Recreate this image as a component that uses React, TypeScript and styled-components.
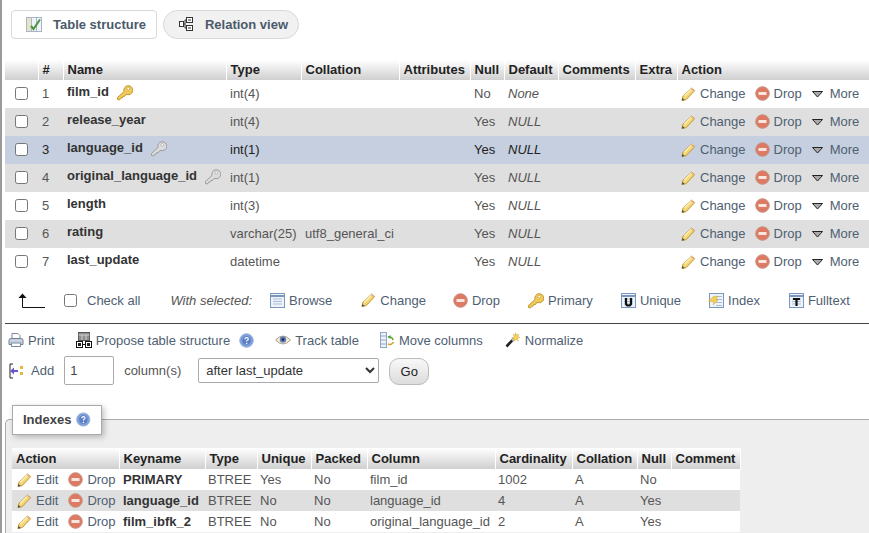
import React from 'react';
import styled, {createGlobalStyle} from "styled-components";

const GlobalStyle = createGlobalStyle`
  html, body {
    margin: 0;
    padding: 0;
    background: #fff;
    overflow: hidden;
  }
  body {
    font-family: "Liberation Sans", Arial, sans-serif;
    font-size: 13px;
    color: #444;
  }
`
const Page = styled.div`
  width: 869px;
  height: 533px;
  box-sizing: border-box;
  border-left: 2px solid #9a9a9a;
  padding-top: 10px;
  overflow: hidden;
`
const Tabs = styled.div`
  display: flex;
  gap: 6px;
  padding-left: 9px;
  height: 29px;
  margin-bottom: 21px;
`
const Tab = styled.div<{$active?: boolean}>`
  display: flex;
  align-items: center;
  gap: ${p => p.$active ? '10px' : '12px'};
  box-sizing: border-box;
  height: 29px;
  padding-bottom: 1px;
  font-weight: bold;
  color: #4b5a6b;
  border: 1px solid #d8d8d8;
  border-radius: ${p => p.$active ? '4px' : '15px'};
  background: ${p => p.$active ? '#fff' : '#f1f1f1'};
  padding-left: ${p => p.$active ? '14px' : '15px'};
  padding-right: 10px;
`
const Table = styled.table<{$w: number}>`
  table-layout: fixed;
  border-collapse: collapse;
  width: ${p => p.$w}px;
`
const StructureTable = styled(Table)`
  margin-left: 3px;
`
const Th = styled.th`
  box-sizing: border-box;
  height: 20px;
  padding: 0 0 2px 4px;
  text-align: left;
  font-size: 13px;
  font-weight: bold;
  color: #222;
  background: linear-gradient(#fff, #cfcfcf);
  border-right: 1px solid #fff;
  white-space: nowrap;
  overflow: hidden;
`
const Tr = styled.tr<{$bg: string}>`
  background: ${p => p.$bg};
  color: ${p => p.$bg === '#c5cfdf' ? '#222' : '#555'};
`
const Td = styled.td`
  box-sizing: border-box;
  height: 28px;
  padding: 0 0 1px 4px;
  white-space: nowrap;
  overflow: hidden;
`
const CheckCell = styled(Td)`
  padding: 0 0 2px 10px;
`
const NameCell = styled(Td)`
  padding: 0 0 6px 4px;
  font-weight: bold;
  color: #333;
`
const NameInner = styled.div`
  display: flex;
  align-items: flex-start;
  gap: 7px;
  height: 15px;
`
const Empty = styled.i`
  font-style: italic;
`
const Box = styled.span`
  display: block;
  box-sizing: border-box;
  width: 13px;
  height: 13px;
  background: #fff;
  border: 1px solid #767676;
  border-radius: 2.5px;
`
const Actions = styled.div<{$gap: number}>`
  display: flex;
  align-items: center;
  gap: ${p => p.$gap}px;
`
const Link = styled.span<{$gap?: number}>`
  display: inline-flex;
  align-items: center;
  gap: ${p => p.$gap ?? 4}px;
  color: #4f6072;
  white-space: nowrap;
`
const BulkBar = styled.div`
  display: flex;
  align-items: center;
  height: 24px;
  margin-top: 12px;
  padding-left: 16px;
`
const BulkCheck = styled.div`
  display: flex;
  align-items: center;
  gap: 10px;
  margin: 0 30px 0 19px;
  color: #4f6072;
`
const WithSelected = styled.i`
  color: #555;
  margin-right: 18px;
`
const BulkItems = styled.div`
  display: flex;
`
const BulkLink = styled(Link)<{$after: number}>`
  margin-right: ${p => p.$after}px;
`
const Rule = styled.div`
  height: 1px;
  background: #444;
  margin: 11px 0 0 3px;
`
const ToolRow = styled.div`
  display: flex;
  align-items: center;
  gap: 21px;
  height: 20px;
  margin-top: 6px;
  padding-left: 6px;
`
const NormalizeLink = styled(Link)`
  gap: 5px;
  margin-left: 1px;
`
const AddRow = styled.form`
  display: flex;
  align-items: flex-start;
  height: 29px;
  margin-top: 6px;
  padding-left: 7px;
`
const AddLabel = styled(Link)`
  align-self: center;
  gap: 7px;
  margin-right: 10px;
`
const NumberInput = styled.input`
  box-sizing: border-box;
  width: 50px;
  height: 29px;
  padding: 0 0 0 5px;
  border: 1px solid #aaa;
  border-radius: 2px;
  font: 13px "Liberation Sans", Arial, sans-serif;
  color: #444;
  margin-right: 10px;
`
const AddText = styled.span`
  align-self: center;
  color: #555;
  margin-right: 17px;
`
const Select = styled.select`
  box-sizing: border-box;
  width: 181px;
  height: 25px;
  margin: 2px 10px 0 0;
  padding-left: 3px;
  background: #fff;
  border: 1px solid #aaa;
  border-radius: 2px;
  font: 13px "Liberation Sans", Arial, sans-serif;
  color: #333;
`
const GoButton = styled.button`
  box-sizing: border-box;
  width: 40px;
  height: 27px;
  margin-top: 2px;
  padding: 0;
  border: 1px solid #bbb;
  border-radius: 10px;
  background: linear-gradient(#f8f8f8, #dcdcdc);
  font: 13px "Liberation Sans", Arial, sans-serif;
  color: #222;
`
const Fieldset = styled.section`
  box-sizing: border-box;
  height: 140px;
  margin: 34px 0 0 3px;
  padding: 0 0 0 6px;
  background: #eee;
  border-top: 1px solid #aaa;
  border-left: 1px solid #aaa;
  border-top-left-radius: 5px;
`
const Legend = styled.div`
  display: flex;
  align-items: center;
  gap: 5px;
  box-sizing: border-box;
  width: 90px;
  height: 30px;
  margin: -15px 0 13px 0;
  padding: 0 10px 2px;
  background: #fff;
  border: 1px solid #aaa;
  box-shadow: 2px 2px 6px rgba(0, 0, 0, 0.25);
  font-weight: bold;
  color: #444;
`
const IndexTh = styled(Th)`
  height: 21px;
  padding-bottom: 0;
`
const IndexTd = styled.td<{$bold?: boolean}>`
  box-sizing: border-box;
  height: 21px;
  padding: 0 0 0 ${p => p.$bold ? 4 : 3}px;
  white-space: nowrap;
  overflow: hidden;
  font-weight: ${p => p.$bold ? 'bold' : 'normal'};
  color: ${p => p.$bold ? '#333' : 'inherit'};
`
const IndexActionTd = styled(IndexTd)`
  padding-left: 5px;
`

const Pencil = () => (
  <svg width="15" height="16" viewBox="0 0 16 16">
    <path d="M1 15l1-4.5L11.500 1.500l3 3L5.500 14z" fill="#f3d774" stroke="#b8903a" strokeWidth="1"/>
    <path d="M3.500 10.500l8.500-8.500" stroke="#fff3b8" strokeWidth="1.500"/>
    <path d="M1 15l.6-2.800 2.200 2.200z" fill="#444"/>
    <path d="M11.500 1.500l3 3-1.200 1.200-3-3z" fill="#e8b28a"/>
  </svg>
)
const DropIcon = () => (
  <svg width="15" height="15" viewBox="0 0 15 15">
    <circle cx="7.500" cy="7.500" r="6.800" fill="#dc7a64" stroke="#c99080"/>
    <rect x="3.500" y="6" width="8" height="3" fill="#f8e6e0"/>
  </svg>
)
const MoreIcon = () => (
  <svg width="13" height="8" viewBox="0 0 13 8">
    <path d="M1.500 1.500h10L6.500 7z" fill="#aaa" stroke="#222" strokeWidth="1"/>
  </svg>
)
const Key = ({fill = '#f0c95a', line = '#c09a30'}: {fill?: string, line?: string}) => (
  <svg width="17" height="17" viewBox="0 0 17 17">
    <path d="M1.500 13.500L8 7.500a4.500 4.500 0 1 1 3 3l-1.500.4-1 1.600-1.500-.2-.8 1.700-1.600.2L3.500 16 1.500 15.500z" fill={fill} stroke={line}/>
    <circle cx="12.300" cy="4.800" r="1.300" fill="#fff" stroke={line} strokeWidth="0.600"/>
  </svg>
)
const GrayKey = () => <Key fill="#dcdcdc" line="#9c9c9c"/>

const TableIcon = ({children}: {children?: React.ReactNode}) => (
  <svg width="15" height="15" viewBox="0 0 15 15">
    <rect x="0.500" y="0.500" width="14" height="14" fill="#eef3fa" stroke="#7c97bd"/>
    <path d="M0.500 3h14" stroke="#7c97bd" strokeWidth="2"/>
    <path d="M3 6h9M3 8.500h9M3 11h9" stroke="#a9bdd9"/>
    {children}
  </svg>
)
const LetterIcon = ({d}: {d: string}) => (
  <TableIcon>
    <path d={d} stroke="#111" strokeWidth="2.200" fill="none"/>
  </TableIcon>
)
const UniqueIcon = () => <LetterIcon d="M5 5v5.500a2.500 2 0 0 0 5 0V5"/>
const FulltextIcon = () => <LetterIcon d="M4 6h7M7.500 6v7"/>
const IndexIcon = () => (
  <svg width="16" height="15" viewBox="0 0 16 15">
    <rect x="1.500" y="0.500" width="14" height="14" fill="#eef3fa" stroke="#7c97bd"/>
    <path d="M8 3.500h6M8 6.500h6M8 9.500h6M8 12.500h6" stroke="#a9bdd9"/>
    <path d="M0.500 8L6 3l4 .5L8 7l2 .5-5 4.500 1-3z" fill="#f1cf5a" stroke="#d4a93a" strokeWidth="0.500"/>
  </svg>
)
const StructureIcon = () => (
  <svg width="17" height="15" viewBox="0 0 17 15">
    <rect x="0.500" y="0.500" width="5" height="14" fill="#e6e4c4" stroke="#a7b6c9"/>
    <rect x="5.500" y="0.500" width="5" height="14" fill="#eef3fa" stroke="#a7b6c9"/>
    <rect x="10.500" y="0.500" width="5" height="14" fill="#eef3fa" stroke="#a7b6c9"/>
    <path d="M5 9l2.500 3L14 2.500" stroke="#4c9440" strokeWidth="2" fill="none"/>
  </svg>
)
const RelationIcon = () => (
  <svg width="14" height="14" viewBox="0 0 14 14">
    <rect x="7.500" y="0.500" width="6" height="5" fill="#fff" stroke="#333"/>
    <rect x="7.500" y="8.500" width="6" height="5" fill="#fff" stroke="#333"/>
    <rect x="0.500" y="4.500" width="4" height="5" fill="#fff" stroke="#333"/>
    <path d="M4.500 7h1.500M6 3v8M6 3h1.500M6 11h1.500M9 3h3M9 11h3" stroke="#333"/>
  </svg>
)
const ArrowIcon = () => (
  <svg width="27" height="15" viewBox="0 0 27 15">
    <path d="M4.500 3v11.500h22.500" stroke="#111" strokeWidth="1" fill="none"/>
    <path d="M0.500 5L4.500 0.500 8.500 5z" fill="#111"/>
  </svg>
)
const PrintIcon = () => (
  <svg width="16" height="16" viewBox="0 0 16 16">
    <path d="M4 1.500h6l2 2v4H4z" fill="#fff" stroke="#7d8ba0"/>
    <path d="M1 8.500q0-2 2-2h10q2 0 2 2v4H1z" fill="#c8d2df" stroke="#6f7f96"/>
    <rect x="3.500" y="11" width="9" height="3.500" fill="#fff" stroke="#7d8ba0"/>
  </svg>
)
const ProposeIcon = () => (
  <svg width="16" height="16" viewBox="0 0 16 16">
    <rect x="2.500" y="0.500" width="11" height="8" fill="#8f8f8f" stroke="#555"/>
    <path d="M2.500 3h11M6 3v5M10 3v5" stroke="#ddd" strokeWidth="0.800"/>
    <rect x="0.500" y="9.500" width="6" height="6" fill="#fff" stroke="#111"/>
    <rect x="9.500" y="9.500" width="6" height="6" fill="#fff" stroke="#111"/>
    <path d="M6.500 12.500h3" stroke="#111"/>
    <rect x="2" y="11" width="3" height="3" fill="#222"/>
    <rect x="11" y="11" width="3" height="3" fill="#222"/>
  </svg>
)
const HelpIcon = () => (
  <svg width="15" height="15" viewBox="0 0 15 15">
    <circle cx="7.500" cy="7.500" r="6.800" fill="#7d9fd8" stroke="#9db5df"/>
    <circle cx="7.500" cy="7.500" r="4.300" fill="#5a7fc4"/>
    <path d="M5.800 6.200q.2-1.600 1.800-1.600 1.700 0 1.700 1.400 0 1-1 1.300-.7.300-.7 1.200" stroke="#fff" strokeWidth="1.200" fill="none"/>
    <rect x="7" y="9.800" width="1.300" height="1.300" fill="#fff"/>
  </svg>
)
const EyeIcon = () => (
  <svg width="16" height="12" viewBox="0 0 16 12">
    <path d="M0.500 6Q8-2 15.500 6 8 14 0.500 6z" fill="#f1e9dd" stroke="#b3a38b"/>
    <circle cx="8" cy="5.500" r="3.200" fill="#5f7fb8"/>
    <circle cx="8" cy="5.500" r="1.300" fill="#223"/>
  </svg>
)
const MoveIcon = () => (
  <svg width="15" height="16" viewBox="0 0 15 16">
    <rect x="0.500" y="0.500" width="6" height="15" fill="#eef3fa" stroke="#8fa6c6"/>
    <path d="M0.500 4h6M0.500 8h6M0.500 12h6" stroke="#8fa6c6"/>
    <path d="M8 5a4 4 0 0 1 5 3" stroke="#5aa63c" strokeWidth="1.600" fill="none"/>
    <path d="M13.500 10a4 4 0 0 1-5.500 2" stroke="#d1a32c" strokeWidth="1.600" fill="none"/>
    <path d="M10.500 3v4l-3-2z" fill="#5aa63c"/>
  </svg>
)
const WandIcon = () => (
  <svg width="15" height="16" viewBox="0 0 15 16">
    <path d="M1.500 14.500L8.500 7" stroke="#222" strokeWidth="2.600"/>
    <path d="M7 8.500l2-2" stroke="#bbb" strokeWidth="2.600"/>
    <path d="M10.500 0.500l.8 2.500 2.500-1-1 2.500 2.200 1-2.500.8.800 2.700-2.500-1.300-1.800 1.500-.2-2.500-2-.8 2.200-1.200-.5-2.400 2 1z" fill="#f2d25c" stroke="#c9a030" strokeWidth="0.400"/>
  </svg>
)
const AddColumnIcon = () => (
  <svg width="15" height="16" viewBox="0 0 15 16">
    <path d="M4 1H1v14h3" stroke="#222" fill="none"/>
    <path d="M1 8l4-3.500V7h4v2H5v2.500z" fill="#6a55c9"/>
    <rect x="11" y="3" width="3" height="3" fill="#e2b93b"/>
    <rect x="11" y="9" width="3" height="3" fill="#e2b93b"/>
  </svg>
)

interface column {
    name: string
    key?: React.ReactNode
    type: string
    collation?: string
    nullable: string
    def: string
}

const columns: column[] = [
    {name: 'film_id', key: <Key/>, type: 'int(4)', nullable: 'No', def: 'None'},
    {name: 'release_year', type: 'int(4)', nullable: 'Yes', def: 'NULL'},
    {name: 'language_id', key: <GrayKey/>, type: 'int(1)', nullable: 'Yes', def: 'NULL'},
    {name: 'original_language_id', key: <GrayKey/>, type: 'int(1)', nullable: 'Yes', def: 'NULL'},
    {name: 'length', type: 'int(3)', nullable: 'Yes', def: 'NULL'},
    {name: 'rating', type: 'varchar(25)', collation: 'utf8_general_ci', nullable: 'Yes', def: 'NULL'},
    {name: 'last_update', type: 'datetime', nullable: 'Yes', def: 'NULL'},
]
const structureHeads: [string, number][] = [
    ['', 33], ['#', 25], ['Name', 163], ['Type', 75], ['Collation', 98], ['Attributes', 71],
    ['Null', 34], ['Default', 54], ['Comments', 77], ['Extra', 42], ['Action', 192],
]
const indexHeads: [string, number][] = [
    ['Action', 107], ['Keyname', 86], ['Type', 52], ['Unique', 54], ['Packed', 56], ['Column', 128],
    ['Cardinality', 77], ['Collation', 65], ['Null', 34], ['Comment', 69],
]
const indexes = [
    {name: 'PRIMARY', unique: 'Yes', column: 'film_id', card: '1002', nullable: 'No'},
    {name: 'language_id', unique: 'No', column: 'language_id', card: '4', nullable: 'Yes'},
    {name: 'film_ibfk_2', unique: 'No', column: 'original_language_id', card: '2', nullable: 'Yes'},
]

const rowBg = (i: number) => i === 2 ? '#c5cfdf' : i % 2 ? '#dfdfdf' : '#fff'

const App = () => {
    return (
        <Page>
            <GlobalStyle/>
            <Tabs>
                <Tab $active><StructureIcon/>Table structure</Tab>
                <Tab><RelationIcon/>Relation view</Tab>
            </Tabs>
            <StructureTable $w={864}>
                <colgroup>
                    {structureHeads.map(([h, w], i) => <col key={i} width={w}/>)}
                </colgroup>
                <thead>
                    <tr>{structureHeads.map(([h], i) => <Th key={i}>{h}</Th>)}</tr>
                </thead>
                <tbody>
                    {columns.map((c, i) => (
                        <Tr key={c.name} $bg={rowBg(i)}>
                            <CheckCell><Box/></CheckCell>
                            <Td>{i + 1}</Td>
                            <NameCell><NameInner>{c.name}{c.key}</NameInner></NameCell>
                            <Td>{c.type}</Td>
                            <Td>{c.collation}</Td>
                            <Td/>
                            <Td>{c.nullable}</Td>
                            <Td><Empty>{c.def}</Empty></Td>
                            <Td/>
                            <Td/>
                            <Td>
                                <Actions $gap={9}>
                                    <Link><Pencil/>Change</Link>
                                    <Link><DropIcon/>Drop</Link>
                                    <Link $gap={6}><MoreIcon/>More</Link>
                                </Actions>
                            </Td>
                        </Tr>
                    ))}
                </tbody>
            </StructureTable>
            <BulkBar>
                <ArrowIcon/>
                <BulkCheck><Box/>Check all</BulkCheck>
                <WithSelected>With selected:</WithSelected>
                <BulkItems>
                    <BulkLink $after={29}><TableIcon/>Browse</BulkLink>
                    <BulkLink $after={27}><Pencil/>Change</BulkLink>
                    <BulkLink $after={27}><DropIcon/>Drop</BulkLink>
                    <BulkLink $after={28}><Key/>Primary</BulkLink>
                    <BulkLink $after={27}><UniqueIcon/>Unique</BulkLink>
                    <BulkLink $after={29}><IndexIcon/>Index</BulkLink>
                    <BulkLink $after={0}><FulltextIcon/>Fulltext</BulkLink>
                </BulkItems>
            </BulkBar>
            <Rule/>
            <ToolRow>
                <Link><PrintIcon/>Print</Link>
                <Link $gap={9}><Link><ProposeIcon/>Propose table structure</Link><HelpIcon/></Link>
                <Link><EyeIcon/>Track table</Link>
                <Link><MoveIcon/>Move columns</Link>
                <NormalizeLink><WandIcon/>Normalize</NormalizeLink>
            </ToolRow>
            <AddRow onSubmit={e => e.preventDefault()}>
                <AddLabel><AddColumnIcon/>Add</AddLabel>
                <NumberInput type="text" defaultValue="1"/>
                <AddText>column(s)</AddText>
                <Select defaultValue="after last_update">
                    <option>after last_update</option>
                </Select>
                <GoButton>Go</GoButton>
            </AddRow>
            <Fieldset>
                <Legend>Indexes <HelpIcon/></Legend>
                <Table $w={728}>
                    <colgroup>
                        {indexHeads.map(([h, w]) => <col key={h} width={w}/>)}
                    </colgroup>
                    <thead>
                        <tr>{indexHeads.map(([h]) => <IndexTh key={h}>{h}</IndexTh>)}</tr>
                    </thead>
                    <tbody>
                        {indexes.map((x, i) => (
                            <Tr key={x.name} $bg={i % 2 ? '#dfdfdf' : '#fff'}>
                                <IndexActionTd>
                                    <Actions $gap={10}>
                                        <Link><Pencil/>Edit</Link>
                                        <Link><DropIcon/>Drop</Link>
                                    </Actions>
                                </IndexActionTd>
                                <IndexTd $bold>{x.name}</IndexTd>
                                <IndexTd>BTREE</IndexTd>
                                <IndexTd>{x.unique}</IndexTd>
                                <IndexTd>No</IndexTd>
                                <IndexTd>{x.column}</IndexTd>
                                <IndexTd>{x.card}</IndexTd>
                                <IndexTd>A</IndexTd>
                                <IndexTd>{x.nullable}</IndexTd>
                                <IndexTd/>
                            </Tr>
                        ))}
                    </tbody>
                </Table>
            </Fieldset>
        </Page>
    );
};

export default App;
